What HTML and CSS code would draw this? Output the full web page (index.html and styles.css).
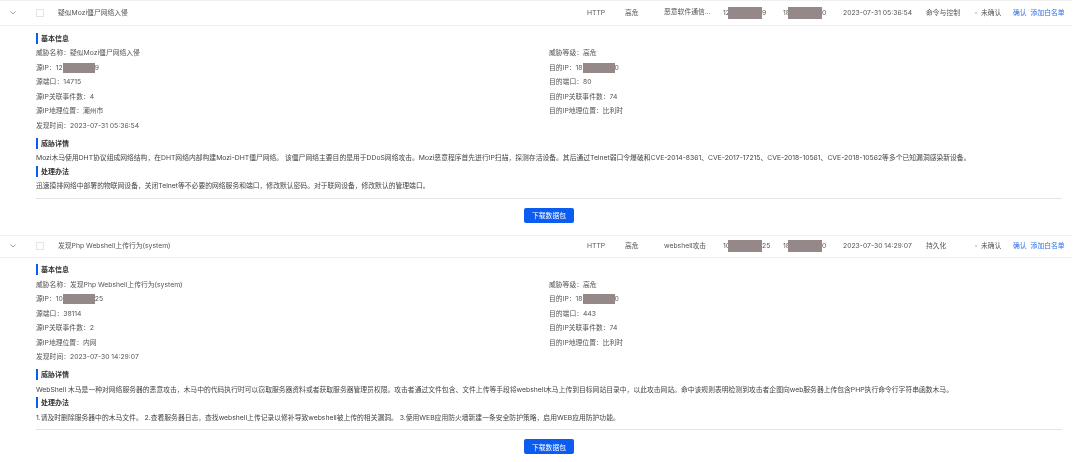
FILE: index.html
```html
<!DOCTYPE html>
<html lang="zh-CN">
<head>
<meta charset="utf-8">
<title>威胁列表</title>
<link rel="stylesheet" href="styles.css">
</head>
<body>
<div class="list">
  <section class="item">
    <div class="row row-first">
      <span class="cell"><svg class="chev" viewBox="0 0 8 5"><path d="M.5.5 4 4 7.5.5"/></svg></span>
      <span class="cell"><i class="check"></i></span>
      <span class="cell">疑似Mozi僵尸网络入侵</span>
      <span class="cell">HTTP</span>
      <span class="cell">高危</span>
      <span class="cell cell-up">恶意软件通信...</span>
      <span class="cell">12<i class="mask"></i>9</span>
      <span class="cell">18<i class="mask"></i>0</span>
      <span class="cell">2023-07-31 05:36:54</span>
      <span class="cell">命令与控制</span>
      <span class="cell"><i class="dot"></i>未确认</span>
      <span class="cell links"><span>确认</span><span>添加白名单</span></span>
    </div>
    <div class="detail">
      <h4 class="head">基本信息</h4>
      <div class="info">
        <p>威胁名称：疑似Mozi僵尸网络入侵</p><p>威胁等级：高危</p>
        <p>源IP：12<i class="mask mask-sm"></i>9</p><p>目的IP：18<i class="mask mask-sm"></i>0</p>
        <p>源端口：14715</p><p>目的端口：80</p>
        <p>源IP关联事件数：4</p><p>目的IP关联事件数：74</p>
        <p>源IP地理位置：潮州市</p><p>目的IP地理位置：比利时</p>
        <p>发现时间：2023-07-31 05:36:54</p>
      </div>
      <h4 class="head head-gap">威胁详情</h4>
      <p class="para">Mozi木马使用DHT协议组成网络结构，在DHT网络内部构建Mozi-DHT僵尸网络。 该僵尸网络主要目的是用于DDoS网络攻击。Mozi恶意程序首先进行IP扫描，探测存活设备。其后通过Telnet弱口令爆破和CVE-2014-8361、CVE-2017-17215、CVE-2018-10561、CVE-2018-10562等多个已知漏洞感染新设备。</p>
      <h4 class="head">处理办法</h4>
      <p class="para">迅速摸排网络中部署的物联网设备，关闭Telnet等不必要的网络服务和端口，修改默认密码。对于联网设备，修改默认的管理端口。</p>
      <div class="foot"><button class="btn">下载数据包</button></div>
    </div>
  </section>
  <section class="item">
    <div class="row">
      <span class="cell"><svg class="chev" viewBox="0 0 8 5"><path d="M.5.5 4 4 7.5.5"/></svg></span>
      <span class="cell"><i class="check"></i></span>
      <span class="cell">发现Php Webshell上传行为(system)</span>
      <span class="cell">HTTP</span>
      <span class="cell">高危</span>
      <span class="cell">webshell攻击</span>
      <span class="cell">10<i class="mask"></i>25</span>
      <span class="cell">18<i class="mask"></i>0</span>
      <span class="cell">2023-07-30 14:29:07</span>
      <span class="cell">持久化</span>
      <span class="cell"><i class="dot"></i>未确认</span>
      <span class="cell links"><span>确认</span><span>添加白名单</span></span>
    </div>
    <div class="detail">
      <h4 class="head">基本信息</h4>
      <div class="info">
        <p>威胁名称：发现Php Webshell上传行为(system)</p><p>威胁等级：高危</p>
        <p>源IP：10<i class="mask mask-sm"></i>25</p><p>目的IP：18<i class="mask mask-sm"></i>0</p>
        <p>源端口：38114</p><p>目的端口：443</p>
        <p>源IP关联事件数：2</p><p>目的IP关联事件数：74</p>
        <p>源IP地理位置：内网</p><p>目的IP地理位置：比利时</p>
        <p>发现时间：2023-07-30 14:29:07</p>
      </div>
      <h4 class="head head-gap">威胁详情</h4>
      <p class="para">WebShell 木马是一种对网络服务器的恶意攻击，木马中的代码执行时可以窃取服务器资料或者获取服务器管理员权限。攻击者通过文件包含、文件上传等手段将webshell木马上传到目标网站目录中，以此攻击网站。命中该规则表明检测到攻击者企图向web服务器上传包含PHP执行命令行字符串函数木马。</p>
      <h4 class="head">处理办法</h4>
      <p class="para">1.请及时删除服务器中的木马文件。 2.查看服务器日志，查找webshell上传记录以修补导致webshell被上传的相关漏洞。 3.使用WEB应用防火墙新建一条安全防护策略，启用WEB应用防护功能。</p>
      <div class="foot"><button class="btn">下载数据包</button></div>
    </div>
  </section>
</div>
</body>
</html>
```
FILE: styles.css
```css
* { box-sizing: border-box; }
html, body { margin: 0; height: 462px; overflow: hidden; background: #fff; }
body {
  font-family: Inter, "Noto Sans CJK SC", sans-serif;
  font-size: 6.8px;
  color: #555;
  filter: blur(.3px);
}
.list { width: 1072px; }
.row {
  display: grid;
  grid-template-columns: 36px 22px 529px 38px 39px 59px 60px 60px 83px 49px 38px 59px;
  align-items: center;
  height: 23px;
  border-top: 1px solid #f0f0f0;
  border-bottom: 1px solid #f0f0f0;
}
.row-first { height: 26px; }
.cell { white-space: nowrap; line-height: 12px; }
.cell-up { position: relative; top: -1px; }
.chev { display: block; width: 6px; height: 3.75px; margin-left: 10px; fill: none; stroke: #777; stroke-width: .9; }
.check { display: block; width: 8px; height: 8px; border: 1px solid #e4e4e4; background: #fff; }
.mask { display: inline-block; width: 34px; height: 12px; margin-left: -2px; background: #948888; vertical-align: middle; }
.mask-sm { width: 32px; height: 10px; margin-left: 0; }
.dot { display: inline-block; width: 2px; height: 2px; margin-right: 4px; border-radius: 50%; background: #c8c8c8; vertical-align: middle; }
.links { display: flex; gap: 4px; color: #2f6fe8; }
.detail { padding: 6.5px 10px 12px 36px; }
.head {
  margin: 0 0 2.5px;
  padding-left: 3px;
  height: 11px;
  line-height: 11px;
  border-left: 2px solid #0d5cf0;
  font-size: 7px;
  font-weight: 700;
  color: #333;
}
.head-gap { margin-top: 4.5px; }
.info { display: grid; grid-template-columns: 513px 1fr; margin-top: 1.5px; }
.info p { margin: 0; height: 14.5px; line-height: 14.5px; white-space: nowrap; }
.para { margin: 0 0 .5px; height: 14px; line-height: 14px; color: #444; white-space: nowrap; }
.foot { margin-top: 4.5px; padding-top: 9px; border-top: 1px solid #e4e4e4; display: flex; justify-content: center; }
.btn {
  width: 50px; height: 15px; padding: 0;
  border: 0; border-radius: 2px;
  background: #0d5cf0; color: #fff;
  font: inherit;
}
```
